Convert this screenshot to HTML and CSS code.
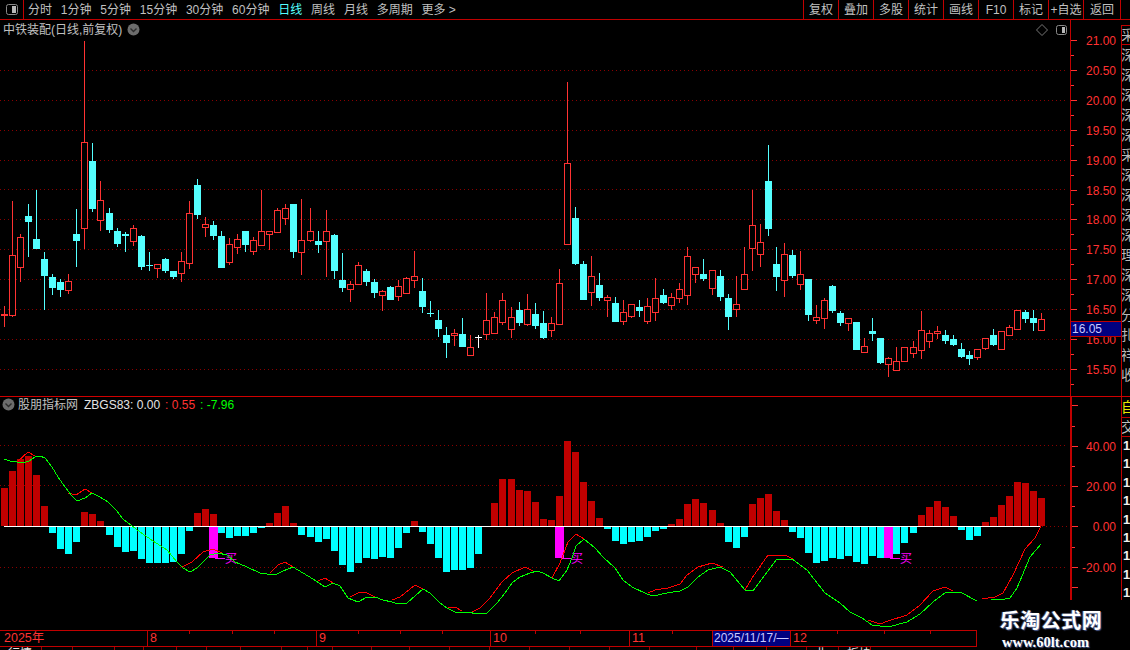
FILE: index.html
```html
<!DOCTYPE html>
<html lang="zh-CN">
<head>
<meta charset="utf-8">
<title>中铁装配 日线</title>
<link rel="stylesheet" href="styles.css">
</head>
<body>
<div class="app">
  <header class="toolbar">
    <div class="toggle-cell">
      <svg class="toggle-icon" width="14" height="11" viewBox="0 0 14 11"><rect x="1.5" y="0.5" width="11" height="10" rx="2" class="ti-frame"/><rect x="7" y="2" width="4" height="7" class="ti-fill"/></svg>
    </div>
    <nav class="periods">
      <span>分时</span><span>1分钟</span><span>5分钟</span><span>15分钟</span><span>30分钟</span><span>60分钟</span><span class="active">日线</span><span>周线</span><span>月线</span><span>多周期</span><span>更多 &gt;</span>
    </nav>
    <nav class="actions">
      <span>复权</span><span>叠加</span><span>多股</span><span>统计</span><span>画线</span><span>F10</span><span>标记</span><span>+自选</span><span>返回</span>
    </nav>
  </header>
  <div class="workspace">
    <main class="charts">
      <section class="panel price-panel">
        <svg id="price" class="chart" width="1121" height="376" viewBox="0 20 1121 376"></svg>
        <div class="legend price-legend">
          <span class="stock">中铁装配(日线,前复权)</span>
          <svg class="chev" width="13" height="13" viewBox="0 0 13 13"><circle cx="6.5" cy="6.5" r="6" class="chev-bg"/><path d="M3.5 5.5 6.5 8.5 9.5 5.5" class="chev-mark"/></svg>
        </div>
        <div class="tools">
          <svg width="12" height="12" viewBox="0 0 12 12"><path d="M6 .5 11.5 6 6 11.5 .5 6Z" class="diamond"/></svg>
          <svg width="13" height="12" viewBox="0 0 13 12"><rect x="1.5" y="1.5" width="10" height="9" rx="2" class="ti-frame"/><rect x="7" y="3" width="3" height="6" class="ti-fill"/></svg>
        </div>
        <div class="last-price">16.05</div>
      </section>
      <section class="panel ind-panel">
        <svg id="ind" class="chart" width="1121" height="233" viewBox="0 397 1121 233"></svg>
        <div class="legend ind-legend">
          <svg class="chev" width="13" height="13" viewBox="0 0 13 13"><circle cx="6.5" cy="6.5" r="6" class="chev-bg"/><path d="M3.5 5.5 6.5 8.5 9.5 5.5" class="chev-mark"/></svg>
          <span class="ind-name">股朋指标网</span>
          <span class="ind-val">ZBGS83: 0.00</span>
          <span class="ind-red">: 0.55</span>
          <span class="ind-green">: -7.96</span>
        </div>
      </section>
      <div id="timebar" class="timebar">
        <span class="tcell">2025年</span><span class="tcell">8</span><span class="tcell">9</span><span class="tcell">10</span><span class="tcell">11</span><span class="tcell cursor">2025/11/17/—</span><span class="tcell">12</span>
      </div>
      <div class="tabs">
        <span>行情</span><span>,</span><span></span><span></span><span></span><span></span><span></span><span></span><span></span><span></span><span></span><span></span><span></span><span></span><span></span><span></span><span></span><span></span><span></span><span></span><span></span><span></span><span>业</span><span>板块</span>
      </div>
    </main>
    <aside class="side">
      <div class="side-upper">
        <span class="boxed">采</span><span>深</span><span>深</span><span>深</span><span>深</span><span>深</span><span>采</span><span>深</span><span>深</span><span>深</span><span>深</span><span>理</span><span>深</span><span>深</span><span>分</span><span>扎</span><span>祥</span><span>收</span>
      </div>
      <div class="side-lower">
        <span class="sel">自</span><span class="head">交</span>
        <b>1</b><b>1</b><b>1</b><b>1</b><b>1</b><b>1</b><b>1</b><b>1</b><b>1</b>
      </div>
    </aside>
  </div>
  <div class="watermark">
    <div class="wm-cn">乐淘公式网</div>
    <div class="wm-url">www.60lt.com</div>
  </div>
</div>
<script src="script.js"></script>
</body>
</html>
```
FILE: styles.css
```css
* { box-sizing: border-box; }
html, body { margin: 0; padding: 0; background: #000; }
body {
  width: 1130px; height: 650px; overflow: hidden;
  font: 12px/1 "Liberation Sans", "Noto Sans CJK SC", sans-serif;
  color: #c0c0c0;
}
.app { position: relative; width: 1130px; height: 650px; display: flex; flex-direction: column; }

/* toolbar */
.toolbar { height: 20px; display: flex; align-items: stretch; border-bottom: 1px solid #c00000; flex: none; }
.toggle-cell { width: 24px; border-right: 1px solid #c00000; display: flex; align-items: center; justify-content: center; }
.ti-frame { fill: none; stroke: #8a8a8a; }
.ti-fill { fill: #b8b8b8; }
.periods { display: flex; align-items: center; gap: 8.8px; padding-left: 4px; flex: 1; }
.periods .active { color: #54ffff; }
.actions { display: flex; margin-right: 9px; border-left: 1px solid #c00000; }
.actions span {
  width: 35px; border-right: 1px solid #c00000;
  display: flex; align-items: center; justify-content: center;
}
.actions span:last-child { width: 37px; }

/* main layout */
.workspace { flex: 1; display: flex; min-height: 0; }
.charts { width: 1121px; flex: none; display: flex; flex-direction: column; }
.panel { position: relative; flex: none; }
.price-panel { height: 377px; border-bottom: 1px solid #d00000; width: 1130px; }
.ind-panel { height: 233px; }
.chart { display: block; }

.legend { position: absolute; display: flex; align-items: center; }
.price-legend { left: 3px; top: 3px; height: 13px; gap: 5px; }
.ind-legend { left: 2px; top: 1px; height: 13px; }
.chev-bg { fill: #6c6c6c; }
.chev-mark { fill: none; stroke: #2c2c2c; stroke-width: 1.4; }
.ind-name { margin-left: 3px; }
.ind-val { margin-left: 6px; color: #e4e4e4; }
.ind-red { margin-left: 5px; color: #ff3232; }
.ind-green { margin-left: 5px; color: #00ff00; }
.tools { position: absolute; left: 1036px; top: 4px; display: flex; gap: 7px; }
.diamond { fill: none; stroke: #777; }
.last-price {
  position: absolute; left: 1070px; top: 301px; width: 52px; height: 16px;
  background: #000080; border: 1px solid #c00000;
  color: #c8c8ff; font-size: 12px; line-height: 14px; padding-left: 1px;
}

/* svg classes */
.grid { stroke: #8a0000; stroke-width: 1; stroke-dasharray: 1 3; }
.axis { stroke: #c00000; }
.c-red { stroke: #ff3232; fill: #000; }
.c-red-line { fill: #ff3232; }
.c-cyan { fill: #54ffff; }
.c-white { fill: #ffffff; }
.bar-red { fill: #c00000; }
.bar-cyan { fill: #00ffff; }
.bar-mag { fill: #ff00ff; }
.zero { fill: #ffffff; }
.red-line { fill: none; stroke: #ff0000; }
.green-line { fill: none; stroke: #00ff00; }
.mag-line { fill: #ff00ff; }
.tick-label { fill: #ff3232; font: 12px "Liberation Sans", sans-serif; text-anchor: end; }
.buy { fill: #ff00ff; font: 12px "Noto Sans CJK SC", sans-serif; }

/* time axis */
.timebar {
  position: relative; width: 977px; height: 17px; flex: none;
  border-top: 1px solid #c00000; border-bottom: 1px solid #c00000; border-right: 1px solid #c00000;
  display: grid; grid-template-columns: 147px 169px 174px 139px 83px 78px 1fr;
  font-size: 12.5px;
}
.tcell { color: #ff3232; padding-left: 2px; line-height: 15px; border-left: 1px solid #c00000; white-space: nowrap; }
.tcell:first-child { border-left: 0; padding-left: 4px; }
.tcell.cursor { background: #000080; color: #c8c8ff; padding-left: 1px; font-size: 12px; }
.tmark { position: absolute; top: 0; width: 1px; height: 3px; background: #c00000; }
.tabs {
  height: 4px; width: 977px; overflow: hidden; flex: none; color: #e8e8e8; line-height: 14px;
  display: grid; grid-auto-flow: column;
  grid-template-columns: 42px 31px 42px 29px 33px 30px 34px 41px 26px 25px 39px 38px 40px 40px 40px 40px 40px 40px 47px 37px 33px 40px 32px 32px;
}
.tabs span { border-right: 1px solid #a00000; padding-left: 8px; white-space: nowrap; overflow: hidden; }

/* right side strip */
.side { width: 9px; flex: none; border-left: 1px solid #c00000; display: flex; flex-direction: column; overflow: hidden; margin-top: 5px; }
.side-upper { height: 372px; display: flex; flex-direction: column; border-bottom: 1px solid #c00000; }
.side-upper span { height: 20px; flex: none; font-size: 14px; line-height: 20px; color: #b8b8b8; margin-left: -1px; white-space: nowrap; overflow: hidden; }
.side-upper .boxed { border-bottom: 1px solid #c00000; border-top: 1px solid #c00000; line-height: 18px; }
.side-lower { display: flex; flex-direction: column; }
.side-lower span { flex: none; font-size: 14px; border-bottom: 1px solid #c00000; margin-left: -1px; overflow: hidden; }
.side-lower .sel { height: 21px; line-height: 20px; color: #e8e800; }
.side-lower .head { height: 19px; line-height: 18px; color: #c0c0c0; }
.side-lower b { flex: none; height: 18.4px; line-height: 18.4px; font-size: 13px; color: #f0f0f0; padding-left: 1px; }

/* watermark */
.watermark {
  position: absolute; left: 977px; top: 600px; width: 153px; height: 50px;
  background: #000; text-align: center; padding-top: 9px;
}
.wm-cn {
  color: #fff; font: 700 20px/22px "Noto Sans CJK SC", sans-serif; letter-spacing: .5px;
  text-shadow: 1px 1px 1px #4a5a8a, -1px 0 1px #4a5a8a; margin-left: -5px;
}
.wm-url {
  color: #fff; font: 700 14.5px/16px "Liberation Serif", serif; margin-top: 3px; margin-left: -16px;
  text-shadow: 1px 1px 1px #4a5a8a;
}
```
FILE: script.js
```javascript
const NS = 'http://www.w3.org/2000/svg';
const cx = i => Math.round(4 + 8.04 * i);

function el(parent, tag, attrs, text) {
  const n = document.createElementNS(NS, tag);
  for (const k in attrs) n.setAttribute(k, attrs[k]);
  if (text !== undefined) n.textContent = text;
  parent.appendChild(n);
  return n;
}

/* candles: colour, wick top, body top, body bottom, wick bottom (page pixels) */
const candles = [
['r',306,314,315,327],['r',201,255,315,317],['r',234,237,267,282],['c',204,216,222,257],['c',190,239,249,249],
['c',252,259,276,310],['c',274,277,288,295],['c',279,282,290,297],['r',274,281,290,294],['c',209,234,241,267],
['r',41,142,228,249],['c',143,161,209,212],['r',181,200,220,231],['c',208,213,230,233],['c',228,231,244,247],
['c',232,234,236,252],['r',225,228,241,246],['c',235,236,267,270],['c',252,265,266,271],['r',264,264,268,278],
['c',258,259,271,273],['c',271,271,277,279],['r',252,261,273,282],['r',201,213,263,269],['c',179,185,215,219],
['r',217,224,227,237],['c',221,225,236,240],['c',231,236,268,268],['r',238,244,262,265],['r',234,239,247,254],
['c',231,231,245,252],['r',237,240,251,255],['r',190,231,245,245],['r',231,231,234,250],['r',208,210,232,232],
['r',204,208,218,225],['c',204,204,252,258],['r',199,240,252,275],['r',208,231,240,242],['c',231,241,245,253],
['r',210,231,241,277],['c',234,235,271,279],['c',253,280,288,292],['r',281,284,289,302],['r',262,265,284,285],
['c',269,271,282,286],['c',279,282,293,298],['r',290,291,295,311],['c',286,287,300,300],['r',280,286,296,301],
['r',277,278,293,293],['r',251,276,280,288],['c',278,291,307,313],['c',301,313,314,317],['c',310,320,329,337],
['c',327,335,343,358],['r',329,333,335,346],['c',318,334,347,347],['r',335,347,355,356],['w',335,337,338,348],
['r',293,320,334,340],['r',312,317,333,333],['r',293,300,322,325],['r',307,317,329,338],['c',302,310,323,326],
['r',294,309,324,326],['c',303,314,326,329],['c',311,323,338,339],['r',317,323,330,337],['r',269,283,324,325],
['r',82,163,244,244],['c',207,218,264,265],['c',261,264,300,300],['r',256,276,292,306],['c',273,285,298,301],
['r',295,297,300,317],['c',297,303,322,322],['r',300,312,321,325],['r',304,304,316,318],['c',300,307,311,317],
['r',298,306,321,324],['r',278,298,312,321],['c',289,295,303,304],['r',293,297,305,310],['r',283,289,298,303],
['r',247,256,295,305],['r',267,267,274,283],['c',259,274,279,281],['r',270,270,288,295],['c',270,276,297,301],
['c',294,298,317,330],['r',276,304,309,317],['r',247,274,289,289],['r',190,225,248,271],['r',224,242,254,267],
['c',145,181,229,236],['c',247,264,277,291],['r',243,254,280,297],['c',250,255,276,278],['r',251,274,284,290],
['c',279,279,315,321],['r',305,317,320,324],['r',298,300,318,329],['c',285,286,311,313],['c',311,313,323,326],
['r',318,318,323,331],['c',322,322,350,350],['r',338,346,352,353],['c',318,331,334,341],['c',338,338,363,364],
['r',357,358,364,377],['r',347,361,370,370],['r',347,347,361,361],['r',341,347,353,358],['r',311,330,350,359],
['r',330,333,341,348],['r',326,331,333,339],['c',330,335,341,344],['c',335,339,345,346],['c',343,349,357,358],
['c',351,355,359,365],['r',349,349,357,360],['r',338,338,348,350],['c',329,335,345,346],['r',331,331,349,349],
['r',325,327,335,335],['r',310,310,329,329],['c',310,312,319,323],['c',310,318,323,331],['r',313,319,330,330]
];

/* indicator bars: end y per candle; <526 red above the zero line, >526 cyan below */
const bars = [488,471,459,456,475,506,533,549,554,542,512,514,521,535,547,552,551,559,563,563,563,562,554,531,513,509,514,533,538,536,536,533,528,523,513,506,523,535,537,542,539,551,565,572,563,558,559,557,558,548,533,521,532,544,558,572,570,570,568,554,526,503,479,479,490,491,502,519,520,496,441,452,482,501,518,529,541,544,542,541,537,531,529,524,519,504,499,503,510,523,542,548,537,504,498,494,511,520,532,538,553,563,561,558,559,556,562,564,556,558,526,554,543,533,515,507,501,507,516,530,540,536,522,517,505,496,482,483,491,498];

const redSegs = [
[[17,462],[28,452],[35,456],[40,456]],
[[68,493],[76,495],[85,489],[92,493]],
[[182,567],[192,562],[203,552],[213,549],[222,553]],
[[270,573],[278,565],[285,562],[293,567]],
[[318,581],[325,578],[333,583]],
[[350,597],[358,593],[365,592],[375,597]],
[[392,600],[400,597],[415,585],[423,589]],
[[448,608],[455,607],[462,611]],
[[472,612],[480,608],[490,598],[502,582],[512,573],[525,567],[533,571]],
[[552,578],[560,563],[568,542],[576,534],[584,539]],
[[648,593],[655,590],[668,588],[680,584],[687,575],[698,567],[712,563],[723,567]],
[[745,590],[752,578],[768,555],[785,555],[793,559]],
[[868,620],[880,624],[888,621],[907,615],[920,605],[933,591],[945,587],[953,591]],
[[982,599],[995,597],[1003,593],[1013,575],[1025,549],[1035,538],[1041,526]]
];

const green = [[4,459],[10,461],[17,462],[23,463],[29,461],[35,457],[40,456],[45,458],[52,467],[58,477],[65,487],[72,496],[77,501],[85,498],[92,493],[100,497],[108,502],[116,510],[123,519],[132,526],[140,532],[153,541],[167,550],[177,562],[183,568],[190,572],[197,568],[203,562],[210,555],[218,553],[227,555],[235,562],[247,567],[260,573],[267,574],[277,574],[283,571],[293,567],[303,573],[313,579],[325,587],[333,583],[340,586],[348,598],[358,602],[367,597],[375,597],[383,600],[392,602],[398,604],[407,603],[415,596],[423,589],[430,593],[440,603],[447,608],[455,612],[467,612],[478,614],[487,613],[497,603],[505,593],[512,583],[520,577],[530,573],[537,571],[543,573],[552,578],[559,581],[567,570],[572,558],[576,546],[584,539],[595,548],[603,557],[615,568],[623,580],[632,587],[647,594],[653,596],[667,593],[680,591],[688,587],[698,577],[708,570],[720,567],[730,572],[745,590],[753,591],[777,559],[792,559],[807,570],[825,593],[840,603],[850,612],[862,618],[872,625],[888,627],[907,622],[920,614],[933,602],[945,593],[960,592],[977,601],[1005,599],[1010,598],[1017,588],[1030,557],[1041,544]];

function axisTicks(svg, rows, top, bottom, x) {
  rows.forEach(r => {
    el(svg, 'rect', {x: x, y: r.y, width: 6, height: 1, class: 'c-red-line'});
    if (r.label) el(svg, 'text', {x: 1116, y: r.y + 4.5, class: 'tick-label'}, r.label);
    if (r.mid) el(svg, 'rect', {x: x, y: r.mid, width: 3, height: 1, class: 'c-red-line'});
  });
}

/* price panel */
const price = document.getElementById('price');
price.setAttribute('shape-rendering', 'crispEdges');
[70,100,130,160,189,219,249,279,309,339,369].forEach(y => {
  el(price, 'line', {x1: 0, y1: y + .5, x2: 1068, y2: y + .5, class: 'grid'});
});
el(price, 'rect', {x: 1070, y: 20, width: 1, height: 376, class: 'bar-red'});
axisTicks(price, [
  {y:40,label:'21.00',mid:55},{y:70,label:'20.50',mid:85},{y:100,label:'20.00',mid:115},{y:130,label:'19.50',mid:145},
  {y:160,label:'19.00',mid:175},{y:190,label:'18.50',mid:204},{y:219,label:'18.00',mid:234},{y:249,label:'17.50',mid:264},
  {y:279,label:'17.00',mid:294},{y:309,label:'16.50',mid:324},{y:339,label:'16.00',mid:354},{y:369,label:'15.50',mid:384}
], 20, 396, 1071);

candles.forEach((c, i) => {
  const x = cx(i), [kind, hi, top, bot, lo] = c;
  const wick = kind === 'r' ? 'c-red-line' : kind === 'c' ? 'c-cyan' : 'c-white';
  el(price, 'rect', {x: x, y: hi, width: 1, height: Math.max(lo - hi, 1), class: wick});
  if (kind === 'r') {
    el(price, 'rect', {x: x - 2.5, y: top + .5, width: 6, height: Math.max(bot - top, 1), class: 'c-red'});
  } else {
    el(price, 'rect', {x: x - 3, y: top, width: 7, height: Math.max(bot - top, 1), class: wick});
  }
});

/* indicator panel */
const ind = document.getElementById('ind');
ind.setAttribute('shape-rendering', 'crispEdges');
[445,485,567].forEach(y => {
  el(ind, 'line', {x1: 0, y1: y + .5, x2: 1068, y2: y + .5, class: 'grid'});
});
el(ind, 'line', {x1: 1042, y1: 526.5, x2: 1068, y2: 526.5, class: 'grid'});
el(ind, 'rect', {x: 1070, y: 397, width: 2, height: 203, class: 'bar-red'});
axisTicks(ind, [
  {y:405},{y:446,label:'40.00',mid:426},{y:486,label:'20.00',mid:466},{y:526,label:'0.00',mid:506},{y:567,label:'-20.00',mid:547},{y:587}
], 397, 600, 1072);

bars.forEach((v, i) => {
  const x = cx(i) - 3;
  if (v < 526) el(ind, 'rect', {x: x, y: v, width: 7, height: 526 - v, class: 'bar-red'});
  else if (v > 526) el(ind, 'rect', {x: x, y: 527, width: 7, height: v - 527, class: 'bar-cyan'});
});
[[26,'买'],[69,'买'],[110,'买']].forEach(([i, t]) => {
  const x = cx(i) - 4;
  el(ind, 'rect', {x: x, y: 527, width: 9, height: 31, class: 'bar-mag'});
  el(ind, 'rect', {x: x + 6, y: 558, width: 10, height: 1, class: 'mag-line'});
  el(ind, 'text', {x: x + 16, y: 562.5, class: 'buy'}, t);
});
el(ind, 'rect', {x: 4, y: 526, width: 1037, height: 1, class: 'zero'});
redSegs.forEach(s => el(ind, 'polyline', {points: s.join(' '), class: 'red-line'}));
el(ind, 'polyline', {points: green.join(' '), class: 'green-line'});

/* time axis marks */
const tb = document.getElementById('timebar');
[189,232,274,358,400,442,535,580,672,837,884,930].forEach(x => {
  const m = document.createElement('i');
  m.className = 'tmark';
  m.style.left = x + 'px';
  tb.appendChild(m);
});
```
